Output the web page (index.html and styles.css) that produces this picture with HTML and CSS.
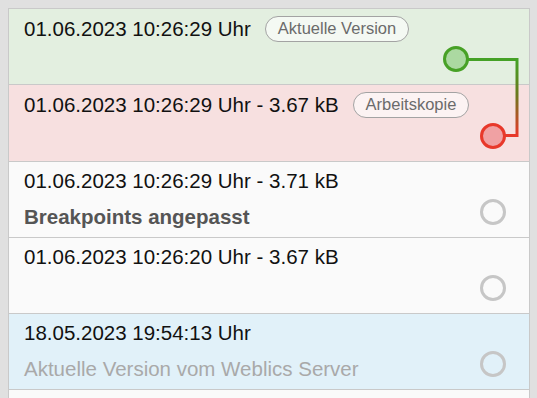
FILE: index.html
```html
<!DOCTYPE html>
<html lang="de">
<head>
<meta charset="utf-8">
<link rel="stylesheet" href="styles.css">
</head>
<body>
<div class="panel">
  <div class="row row-current">
    <div class="text">
      <div class="line">01.06.2023 10:26:29 Uhr <span class="badge">Aktuelle Version</span></div>
    </div>
    <div class="dot dot-green"></div>
  </div>
  <div class="row row-work">
    <div class="text">
      <div class="line">01.06.2023 10:26:29 Uhr - 3.67 kB <span class="badge">Arbeitskopie</span></div>
    </div>
    <div class="dot dot-red"></div>
  </div>
  <div class="row">
    <div class="text">
      <div class="line">01.06.2023 10:26:29 Uhr - 3.71 kB</div>
      <div class="line sub sub-bold">Breakpoints angepasst</div>
    </div>
    <div class="dot"></div>
  </div>
  <div class="row">
    <div class="text">
      <div class="line">01.06.2023 10:26:20 Uhr - 3.67 kB</div>
    </div>
    <div class="dot"></div>
  </div>
  <div class="row row-server">
    <div class="text">
      <div class="line">18.05.2023 19:54:13 Uhr</div>
      <div class="line sub sub-muted">Aktuelle Version vom Weblics Server</div>
    </div>
    <div class="dot"></div>
  </div>
  <div class="row row-tail"></div>
  <svg class="connector" width="522" height="160" viewBox="0 0 522 160">
    <defs>
      <linearGradient id="g" gradientUnits="userSpaceOnUse" x1="0" y1="52" x2="0" y2="126">
        <stop offset="0" stop-color="#45a126"/>
        <stop offset="0.45" stop-color="#6a7a1e"/>
        <stop offset="1" stop-color="#e8382a"/>
      </linearGradient>
    </defs>
    <path d="M459 50.5 H508 V126.5 H496" fill="none" stroke="url(#g)" stroke-width="3"/>
  </svg>
</div>
</body>
</html>
```

FILE: styles.css
```css
html, body {
  margin: 0;
  padding: 0;
}
html {
  overflow: hidden;
}
body {
  background: #e0e0e0;
  padding: 8px 0 0 8px;
  font-family: "Liberation Sans", Arial, Helvetica, sans-serif;
  height: 398px;
  box-sizing: border-box;
  overflow: hidden;
}
.panel {
  position: relative;
  width: 522px;
  box-sizing: border-box;
  border: 1px solid #c9c9c9;
  border-bottom: none;
  background: #fafafa;
}
.row {
  display: flex;
  justify-content: space-between;
  height: 76px;
  box-sizing: border-box;
  border-bottom: 1px solid #c9c9c9;
  padding: 7px 0 0 15px;
}
.row-current { background: #e3efe0; }
.row-work { background: #f7e0e0; height: 77px; }
.row-server { background: #e1f1f9; }
.row-tail {
  height: 8px;
  border-bottom: none;
}
.text {
  display: flex;
  flex-direction: column;
  gap: 12px;
}
.line {
  font-size: 20.5px;
  line-height: 24px;
  color: #111;
  white-space: nowrap;
  display: flex;
  align-items: center;
}
.sub-bold {
  font-weight: bold;
  color: #555;
}
.sub-muted {
  color: #a9a9a9;
}
.badge {
  display: inline-block;
  margin-left: 14px;
  height: 26px;
  line-height: 23px;
  box-sizing: border-box;
  padding: 0 12px;
  border: 1.5px solid #a3a3a3;
  border-radius: 13px;
  background: rgba(255, 255, 255, 0.6);
  color: #6b6b6b;
  font-size: 16.5px;
}
.dot {
  align-self: flex-start;
  width: 26px;
  height: 26px;
  margin-top: 30px;
  margin-right: 23px;
  box-sizing: border-box;
  border: 3px solid #c6c6c6;
  border-radius: 50%;
  flex: none;
}
.dot-green {
  margin-right: 60px;
  border: 3.5px solid #47a126;
  background: #abd9a1;
}
.dot-red {
  margin-top: 31px;
  border: 3.5px solid #e8382a;
  background: #f0a1a3;
}
.connector {
  position: absolute;
  left: 0;
  top: 0;
  pointer-events: none;
}
```
